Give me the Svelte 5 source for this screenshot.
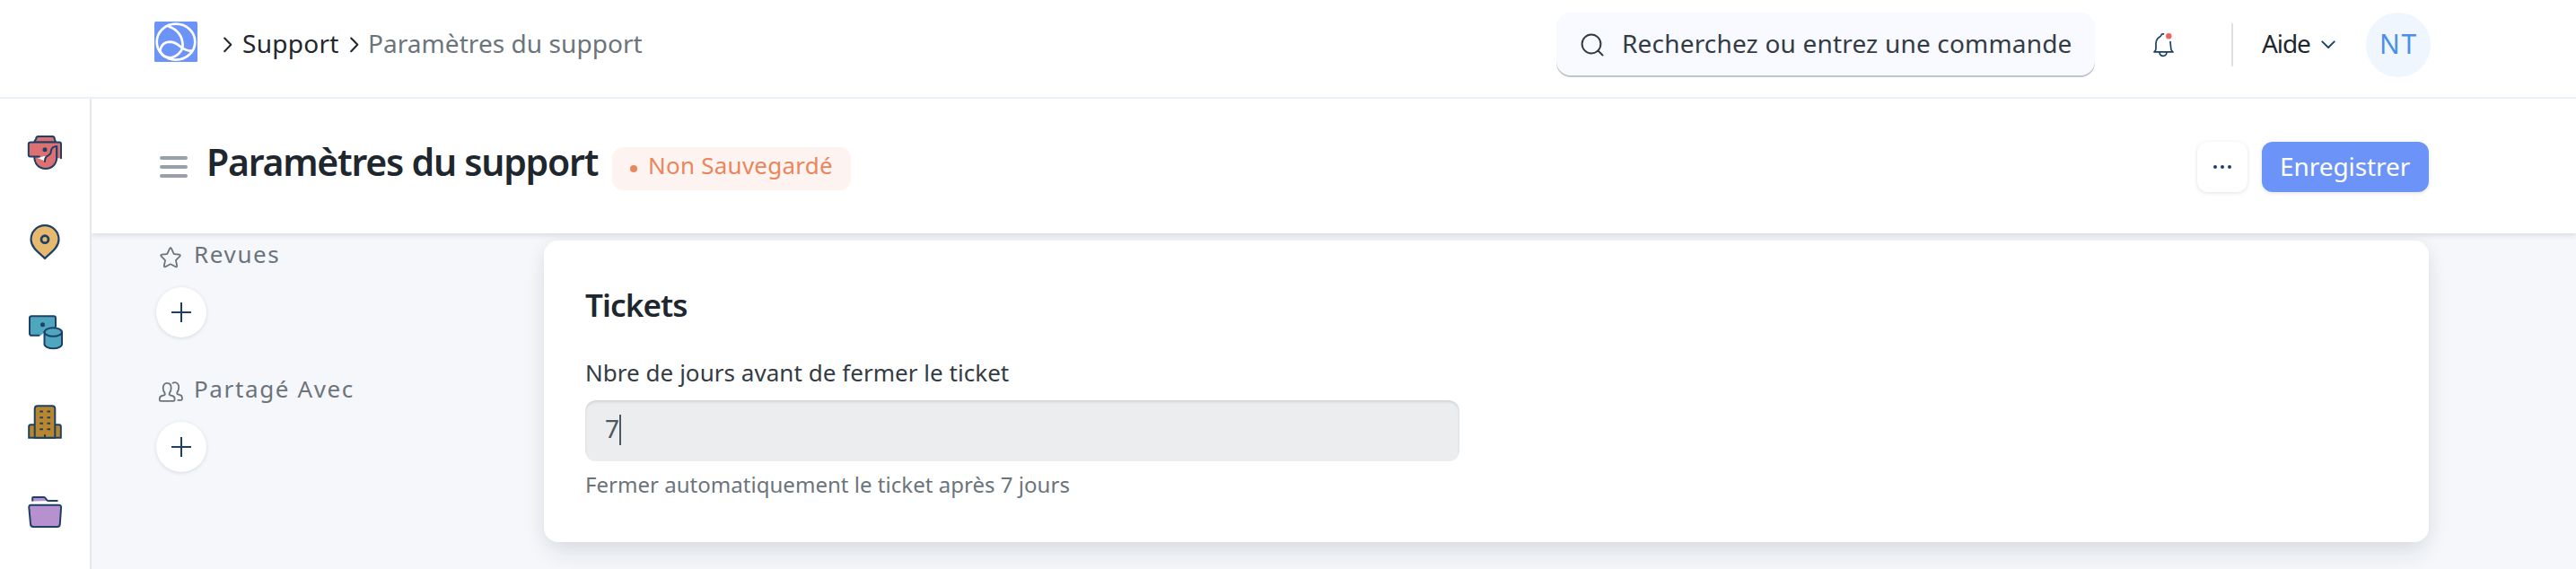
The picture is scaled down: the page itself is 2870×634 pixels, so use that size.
<script>
  const search = 'Recherchez ou entrez une commande';
  const sections = [
    { title: 'Revues', icon: 'star' },
    { title: 'Partagé Avec', icon: 'users' }
  ];
  let days = $state('7');
</script>

{#snippet crumbArrow()}
  <svg class="crumb-arrow" width="10" height="18" viewBox="0 0 10 18" fill="none"><path d="M1.2 1.5 8.3 8.8 1.2 16.2" stroke="#1f272e" stroke-width="2" stroke-linecap="round" stroke-linejoin="round" /></svg>
{/snippet}

<div class="page">
  <header class="navbar">
    <svg class="logo" width="48" height="45" viewBox="0 0 48 45" fill="none">
      <rect width="48" height="45" rx="1.5" fill="#6c94f8" />
      <g stroke="#fff" stroke-width="2.7" stroke-linecap="round">
        <ellipse cx="24" cy="22.7" rx="21.3" ry="20" />
        <path d="M15.5 5.2C25.5 8.8 31.5 15 31.6 27c-.2 5.500-6 12.400-14 13.300C11 39.800 7 36.500 6.300 32" />
        <path d="M6.300 32.200C7.500 26.500 11 22.900 17 22.700c12 .2 12 10.500 25 10" />
      </g>
    </svg>
    <nav class="crumbs">
      {@render crumbArrow()}
      <span class="crumb-link">Support</span>
      {@render crumbArrow()}
      <span class="crumb-current">Paramètres du support</span>
    </nav>
    <div class="search">
      <svg width="26" height="26" viewBox="0 0 26 26" fill="none" stroke="#333c44" stroke-width="2" stroke-linecap="round"><circle cx="12" cy="12" r="10.400" /><path d="M19.500 19.500 24.500 24.500" /></svg>
      <span>{search}</span>
    </div>
    <svg class="bell" width="24" height="28" viewBox="0 0 24 28" fill="none" stroke="#1d4066" stroke-width="1.700" stroke-linecap="round" stroke-linejoin="round">
      <path d="M12.500 1.800H11.500C10.200 1.800 10 2.600 9.700 3.600 9.400 5 7 5.300 5.500 7.400 4.300 9 4 10.200 4 12v6.500c0 1.600-.9 2.400-2 3.400h21c-1.100-1-2.200-1.800-2.200-3.400L20 10.500" />
      <path d="M8 22.300c.3 2.500 1.800 4 4 4s3.800-1.500 4-4" />
      <circle cx="18.300" cy="4.300" r="3.200" fill="#ef635c" stroke="none" />
    </svg>
    <span class="divider"></span>
    <span class="help-menu">Aide</span>
    <svg class="chevron" width="16" height="10" viewBox="0 0 16 10" fill="none"><path d="M1.300 1.300 8 8l6.700-6.700" stroke="#1d4066" stroke-width="1.900" stroke-linecap="round" stroke-linejoin="round" /></svg>
    <span class="avatar">NT</span>
  </header>

  <div class="body">
    <aside class="rail">
      <svg width="40" height="40" viewBox="0 0 40 40" fill="none" stroke="#1d4066" stroke-width="2" stroke-linecap="round" stroke-linejoin="round">
        <path d="M8.500 8.500V7.500c0-1 1.700-1.500 1.700-3 0-1.500 1-2.500 2.500-2.500h15.600c1.500 0 2.500 1 2.500 2.500 0 1.500 1 2 1 3v1z" fill="#dc7073" />
        <path d="M8.300 24.500c0 8 5 13.500 12.500 13.500S33.300 32.500 33.300 24.500V12.700H8.300z" fill="#dc7073" />
        <path d="M38.200 26.500V10.500c0-1.200-.8-2-2-2H4.300c-1.500 0-2.500.8-2.500 2v12c0 1.200.8 2 2 2H14l5-1 7-2 4-8h3.300V26z" fill="#dc7073" stroke="none" />
        <path d="M11.500 26l9-2.300-1.500 5.300z" fill="#fff" stroke="none" />
        <path d="M38 26.300V10.500c0-1.200-.8-2-2-2H4.300c-1.500 0-2.500.8-2.500 2v12c0 1.200.8 2 2 2H14" />
        <path d="M33.300 26V12.900c-3.800.2-5.800 2.200-6.300 4.600-.3 1.500-.2 3-1.200 4.200-1.200 1.400-3.200 1.600-4.600 3.500-.8 1-1.200 2.600-1.200 4.800" />
        <circle cx="20" cy="16.700" r="2.500" fill="#1d4066" stroke="none" />
      </svg>
      <svg width="40" height="40" viewBox="0 0 40 40" fill="none" stroke="#1d4066" stroke-width="2.200" stroke-linejoin="round">
        <path d="M20 38C16.500 33.500 4.500 27 4.500 16.700a15.500 15.500 0 0 1 31 0C35.500 27 23.500 33.500 20 38z" fill="#e6b96f" />
        <circle cx="20" cy="16.700" r="4" stroke-width="2.800" />
      </svg>
      <svg width="40" height="40" viewBox="0 0 40 40" fill="none" stroke="#1d4066" stroke-width="2" stroke-linecap="round" stroke-linejoin="round">
        <path d="M15.500 23.800 20 20 32 15V4.500c0-1.500-.7-2.300-2.200-2.300H5.200C3.700 2.200 3 3 3 4.500v17c0 1.500.7 2.300 2.200 2.300z" fill="#4fa7bf" stroke="none" />
        <path d="M13.500 23.800H5.200C3.700 23.800 3 23 3 21.500v-17c0-1.500.7-2.300 2.200-2.300h24.600c1.500 0 2.200.8 2.200 2.300V14" />
        <circle cx="17.500" cy="11.800" r="2.500" fill="#1d4066" stroke="none" />
        <path d="M19.500 20v13.500c0 2.500 4.300 4.700 9.800 4.700s9.700-2.200 9.700-4.700V20" fill="#4fa7bf" />
        <ellipse cx="29.300" cy="20" rx="9.700" ry="4.800" fill="#4fa7bf" />
      </svg>
      <svg width="40" height="40" viewBox="0 0 40 40" fill="none" stroke="#1d4066" stroke-width="2">
        <path d="M8.500 23.300H4.200c-1.300 0-2 .7-2 2V37.700H37.800V25.300c0-1.300-.7-2-2-2H31.500" fill="#b8862f" />
        <path d="M8.700 37.700V5.500c0-2 1.300-3.300 3.300-3.300h16c2 0 3.300 1.300 3.300 3.300V37.700z" fill="#b8862f" />
        <path d="M14.300 8.500h3.600M22.500 8.500h3.600M14.300 15.200h3.600M22.500 15.200h3.600M14.300 21.800h3.600M22.500 21.800h3.600M14.300 28.300h3.600M22.500 28.300h3.600M20 34v4" />
      </svg>
      <svg width="40" height="40" viewBox="0 0 40 40" fill="none" stroke="#1d4066" stroke-width="2" stroke-linejoin="round">
        <path d="M6.200 8.500V4h12.500c1.600 0 2 1 2.800 2.200.6 1 1 1.500 2 1.800z" fill="#b790cf" stroke="none" />
        <path d="M6.200 8.500V4.800c0-.6.300-.8.800-.8h11.700c1.600 0 2 1 2.800 2.200.6 1 1.200 1.800 2.500 1.800h10.500" />
        <path d="M4.500 12.700h31c1.700 0 2.700 1 2.600 2.700l-1.300 18.500c-.1 1.900-1.200 3.100-3 3.100H7c-1.800 0-2.900-1.200-3-3.100L2.300 15.400c-.1-1.700.7-2.700 2.200-2.700z" fill="#b790cf" />
      </svg>
    </aside>

    <div class="content">
      <div class="page-head">
        <span class="burger"><i></i><i></i><i></i></span>
        <h1>Paramètres du support</h1>
        <span class="status"><i></i>Non Sauvegardé</span>
        <button class="more" aria-label="Menu"><i></i><i></i><i></i></button>
        <button class="save">Enregistrer</button>
      </div>

      <div class="main">
        <div class="side">
          {#each sections as s}
            <section>
              <div class="side-title">
                {#if s.icon === 'star'}
                  <svg width="28" height="26" viewBox="0 0 28 26" fill="none" stroke="#6b747b" stroke-width="1.800" stroke-linejoin="round"><path d="M13.100 2.900c.5-1 1.300-1 1.800 0l2.700 5.700c.1.300.4.500.7.500l5.400.6c1.100.1 1.400 1.100.6 1.900l-4 4c-.3.300-.4.600-.3 1l1.200 5.400c.2 1.100-.6 1.700-1.600 1.200l-5-2.700a1.200 1.200 0 0 0-1.200 0l-5 2.700c-1 .5-1.800-.1-1.600-1.200L8 16.600c.1-.4 0-.7-.3-1l-4-4c-.8-.8-.5-1.800.6-1.900l5.400-.6c.3 0 .6-.2.700-.5z" /></svg>
                {:else}
                  <svg width="28" height="26" viewBox="0 0 28 26" fill="none" stroke="#6b747b" stroke-width="1.800" stroke-linecap="round" stroke-linejoin="round"><path d="M1.800 21.500v-1c0-1.700.8-2.800 2.300-3.300l2.700-.9c.9-.3 1.300-1.100.9-2C6.500 12.500 5.700 10.500 5.700 8.400c0-3.300 1.800-5.500 4.500-5.500s4.500 2.200 4.500 5.500c0 2.100-.8 4.100-2 5.900-.4.900 0 1.700.9 2l2.700.9c1.500.5 2.300 1.600 2.300 3.300v1c0 .9-.5 1.400-1.400 1.400h-14c-.9 0-1.400-.5-1.400-1.400z" /><path d="M16.500 2.700c.7-.4 1.300-.6 2.200-.6 2.600 0 4.500 2.200 4.500 5.400 0 2.200-.7 4-1.800 5.800-.5.900-.1 1.700.8 2l2.400.9c1.500.5 2.300 1.600 2.300 3.200v1.100c0 .9-.5 1.400-1.400 1.400h-3.200" /></svg>
                {/if}
                <span>{s.title}</span>
              </div>
              <button class="add" aria-label="Ajouter"><svg width="22" height="22" viewBox="0 0 22 22" stroke="#1d4066" stroke-width="2"><path d="M11 0v22M0 11h22" /></svg></button>
            </section>
          {/each}
        </div>

        <div class="card">
          <h2>Tickets</h2>
          <div class="label">Nbre de jours avant de fermer le ticket</div>
          <div class="field"><span>{days}</span><i></i></div>
          <p>Fermer automatiquement le ticket après {days} jours</p>
        </div>
      </div>
    </div>
  </div>
</div>

<style>
  .page {
    width: 2870px;
    height: 634px;
    overflow: hidden;
    background: #fff;
    font-family: 'Noto Sans', sans-serif;
    font-size: 28px;
    color: #1f272e;
    display: flex;
    flex-direction: column;
  }
  .page *, .page { box-sizing: border-box; }
  svg { display: block; flex: none; }
  button { border: 0; padding: 0; font: inherit; }
  .navbar {
    height: 110px;
    flex: none;
    border-bottom: 2px solid #ebf1f5;
    padding: 0 162px 0 172px;
    display: flex;
    align-items: flex-start;
    line-height: 96px;
    white-space: nowrap;
  }
  .logo { margin-top: 24px; }
  .crumbs { display: flex; margin-left: 29px; }
  .crumb-arrow { margin-top: 41px; }
  .crumb-link { width: 107px; margin: 0 13px 0 11px; letter-spacing: 0.28px; }
  .crumb-current { margin-left: 10px; color: #6b747b; letter-spacing: 0.06px; }
  .search {
    width: 600px;
    height: 72px;
    margin: 14px 64px 0 auto;
    padding-left: 27px;
    display: flex;
    background: #f9faff;
    border-radius: 16px;
    box-shadow: inset 0 -2px 0 #c0c5ca;
    color: #333c44;
    line-height: 68px;
  }
  .search svg { margin: 23px 20px 0 0; }
  .search span { letter-spacing: 0.18px; }
  .bell { margin: 36px 65px 0 0; }
  .divider { width: 2px; height: 48px; margin: 26px 32px 0 -1px; background: #dce0e3; }
  .help-menu { width: 66px; letter-spacing: -1.110px; }
  .chevron { margin: 45px 34px 0 0; }
  .avatar {
    width: 72px;
    height: 72px;
    margin-top: 14px;
    border-radius: 50%;
    background: #eff6fd;
    color: #4a90ea;
    font-size: 30px;
    line-height: 70px;
    letter-spacing: 1.600px;
    padding-left: 15px;
  }
  .body { flex: 1; min-height: 0; display: flex; }
  .rail {
    width: 102px;
    flex: none;
    border-right: 2px solid #e4e7ed;
    padding: 40px 0 0 30px;
    display: flex;
    flex-direction: column;
    gap: 60px;
  }
  .content { flex: 1; display: flex; flex-direction: column; background: #f5f7fb; }
  .page-head {
    height: 150px;
    flex: none;
    z-index: 1;
    background: #fff;
    box-shadow: 0 2px 6px rgba(31, 39, 46, 0.14);
    clip-path: inset(0 0 -12px 0);
    padding: 0 164px 0 76px;
    display: flex;
    align-items: flex-start;
    white-space: nowrap;
  }
  .burger { width: 31px; margin-top: 64px; display: grid; gap: 6px; }
  .burger i { height: 4px; border-radius: 2px; background: #98a1a9; }
  h1 {
    margin: 0 0 0 21px;
    width: 452px;
    font-size: 41px;
    font-weight: 600;
    line-height: 140px;
    letter-spacing: -1.230px;
  }
  .status {
    width: 266px;
    height: 48px;
    margin-top: 54px;
    padding-left: 20px;
    border-radius: 12px;
    background: #fdf4f1;
    color: #ea865b;
    font-size: 26px;
    line-height: 41px;
    letter-spacing: 0.240px;
    display: flex;
  }
  .status i { width: 8px; height: 8px; margin: 20px 12px 0 0; border-radius: 50%; background: #ea865b; }
  .more, .save {
    height: 56px;
    margin-top: 48px;
    border-radius: 12px;
    box-shadow: 0 1px 4px rgba(31, 39, 46, 0.14);
  }
  .more {
    width: 56px;
    margin-left: auto;
    background: #fff;
    display: flex;
    align-items: center;
    justify-content: center;
    gap: 4px;
  }
  .more i { width: 4px; height: 4px; border-radius: 50%; background: #1d4066; }
  .save {
    width: 186px;
    margin-left: 16px;
    padding: 0 0 1px 20px;
    background: #6c94f8;
    color: #fff;
    line-height: 55px;
    letter-spacing: -0.070px;
    text-align: left;
  }
  .main { flex: 1; display: flex; padding-left: 72px; }
  .side { width: 432px; }
  section { height: 150px; display: flex; flex-direction: column; gap: 16px; }
  .side-title {
    height: 44px;
    display: flex;
    padding-left: 2px;
    font-size: 26px;
    line-height: 46px;
    letter-spacing: 1.620px;
    color: #6b747b;
  }
  .side-title svg { margin: 14px 12px 0 0; }
  .add {
    width: 56px;
    height: 56px;
    border-radius: 50%;
    background: #fff;
    box-shadow: 0 1px 4px rgba(31, 39, 46, 0.14);
    display: grid;
    place-items: center;
  }
  .card {
    width: 2100px;
    height: 336px;
    margin-top: 8px;
    padding: 51px 46px 0;
    border-radius: 16px;
    background: #fff;
    box-shadow: 0 14px 28px -4px rgba(31, 39, 46, 0.11), 0 0 20px rgba(31, 39, 46, 0.05);
  }
  h2 { margin: 0; font-size: 35px; font-weight: 600; line-height: 42px; letter-spacing: -0.890px; }
  .label { margin: 36px 0 13px; font-size: 26px; line-height: 36px; letter-spacing: 0.040px; color: #333c44; }
  .field {
    width: 974px;
    height: 68px;
    padding: 0 22px;
    display: flex;
    border-radius: 12px;
    background: #ebedef;
    box-shadow: inset 0 2px 3px rgba(31, 39, 46, 0.12);
    color: #50585f;
    line-height: 63px;
  }
  .field i { width: 2px; height: 34px; margin: 16px 0 0; background: #50585f; }
  p { margin: 10px 0 0; font-size: 24px; line-height: 32px; letter-spacing: 0.030px; color: #6b747b; }
</style>
